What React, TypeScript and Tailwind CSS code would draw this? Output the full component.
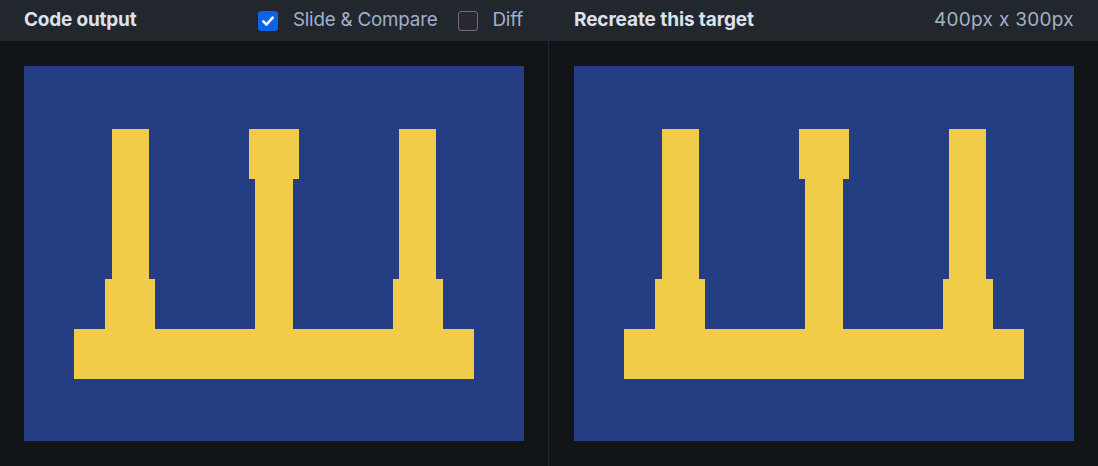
import React from 'react';

const Drawing: React.FC = () => (
  <svg width="500" height="375" viewBox="0 0 500 375" className="block">
    <rect width="500" height="375" fill="#243d83" />
    <g fill="#f0cc48">
      <rect x="50" y="263" width="400" height="50" />
      <rect x="88" y="63" width="37" height="150" />
      <rect x="81" y="213" width="50" height="50" />
      <rect x="225" y="63" width="50" height="50" />
      <rect x="231" y="113" width="38" height="150" />
      <rect x="375" y="63" width="37" height="150" />
      <rect x="369" y="213" width="50" height="50" />
    </g>
  </svg>
);

const Check: React.FC<{ checked?: boolean; label: string }> = ({ checked, label }) => (
  <label className="flex items-center gap-[15px]">
    {checked ? (
      <span className="flex h-5 w-5 items-center justify-center rounded-[3px] bg-[#0b63e5]">
        <svg width="14" height="14" viewBox="0 0 14 14">
          <path d="M2.3 7.4 L5.5 10.5 L11.7 3.6" fill="none" stroke="#fff" strokeWidth="2.6" strokeLinecap="round" strokeLinejoin="round" />
        </svg>
      </span>
    ) : (
      <span className="h-5 w-5 rounded-[3px] border border-[#6d6b74] bg-[#2a2730]" />
    )}
    <span className="text-[18.8px] tracking-[-0.2px] text-[#9fb1c9]">{label}</span>
  </label>
);

export default function App() {
  return (
    <div className="flex h-[466px] w-[1098px] bg-[#121518]" style={{ fontFamily: 'Inter, "Noto Sans", sans-serif' }}>
      {/* left: code output */}
      <div className="flex w-[549px] flex-col border-r border-[#23272e]">
        <div className="flex h-[41px] items-center justify-between bg-[#22262d] pl-6 pr-[25px]">
          <span className="text-[19px] font-bold tracking-[-0.2px] text-[#dde2ea]">Code output</span>
          <div className="flex items-center gap-5">
            <Check checked label="Slide & Compare" />
            <Check label="Diff" />
          </div>
        </div>
        <div className="pl-6 pt-[25px]">
          <Drawing />
        </div>
      </div>

      {/* right: target */}
      <div className="flex flex-1 flex-col">
        <div className="flex h-[41px] items-center justify-between bg-[#22262d] pl-[25px] pr-6">
          <span className="text-[19px] font-bold tracking-[-0.1px] text-[#dde2ea]">Recreate this target</span>
          <span className="text-[19px] tracking-[0.3px] text-[#a4b2c5]">400px x 300px</span>
        </div>
        <div className="pl-[25px] pt-[25px]">
          <Drawing />
        </div>
      </div>
    </div>
  );
}
